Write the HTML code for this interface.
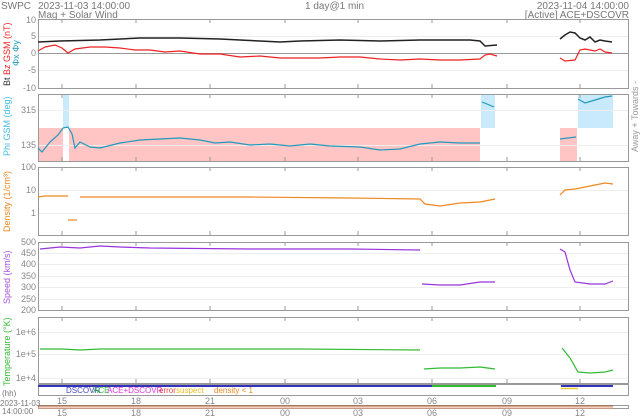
<!DOCTYPE html>
<html><head><meta charset="utf-8"><style>
html,body{margin:0;padding:0;background:#fff;width:640px;height:418px;overflow:hidden}
svg{display:block;font-family:"Liberation Sans",sans-serif}
</style></head><body>
<svg width="640" height="418" viewBox="0 0 640 418" xmlns="http://www.w3.org/2000/svg">
<g font-size="10" fill="#777">
<text x="1" y="9">SWPC</text>
<text x="38" y="9">2023-11-03 14:00:00</text>
<text x="38" y="18">Mag + Solar Wind</text>
<text x="305" y="9">1 day@1 min</text>
<text x="629" y="9" text-anchor="end">2023-11-04 14:00:00</text>
<text x="629" y="18" text-anchor="end">[Active] ACE+DSCOVR</text>
</g>
<!-- shading panel 2 -->
<rect x="38" y="128" width="442" height="34" fill="#ffc4c4"/>
<rect x="63" y="94" width="6" height="34" fill="#c8eafc"/>
<rect x="63" y="128" width="6" height="34" fill="#fff"/>
<rect x="481" y="94" width="14" height="34" fill="#c8eafc"/>
<rect x="560" y="128" width="17" height="34" fill="#ffc4c4"/>
<rect x="578" y="94" width="35" height="34" fill="#c8eafc"/>
<!-- grid lines -->
<g stroke="#eee" stroke-width="1">
<line x1="38" y1="36.5" x2="629" y2="36.5"/><line x1="38" y1="70.5" x2="629" y2="70.5"/>
<line x1="38" y1="110.5" x2="629" y2="110.5"/><line x1="38" y1="145.5" x2="629" y2="145.5"/>
<line x1="38" y1="190.5" x2="629" y2="190.5"/><line x1="38" y1="213.5" x2="629" y2="213.5"/>
<line x1="38" y1="253.5" x2="629" y2="253.5"/><line x1="38" y1="264.5" x2="629" y2="264.5"/><line x1="38" y1="276.5" x2="629" y2="276.5"/><line x1="38" y1="287.5" x2="629" y2="287.5"/><line x1="38" y1="299.5" x2="629" y2="299.5"/>
<line x1="38" y1="332.5" x2="629" y2="332.5"/><line x1="38" y1="354.5" x2="629" y2="354.5"/><line x1="38" y1="378.5" x2="629" y2="378.5"/>
</g>
<line x1="38" y1="53.5" x2="629" y2="53.5" stroke="#999"/>
<!-- panel frames -->
<g fill="none" stroke="#999" stroke-width="1">
<rect x="38.5" y="19.5" width="590" height="69"/>
<rect x="38.5" y="94.5" width="590" height="67"/>
<rect x="38.5" y="167.5" width="590" height="68"/>
<rect x="38.5" y="242.5" width="590" height="68"/>
<rect x="38.5" y="317.5" width="590" height="66"/>
<rect x="38.5" y="384.5" width="590" height="11"/>
<rect x="38.5" y="405.5" width="590" height="3"/>
</g>
<!-- ticks -->
<g stroke="#999">
<path d="M62 19v4M136 19v4M210 19v4M285 19v4M358 19v4M432 19v4M507 19v4M580 19v4M62 88v-4M136 88v-4M210 88v-4M285 88v-4M358 88v-4M432 88v-4M507 88v-4M580 88v-4"/>
<path d="M62 94v4M136 94v4M210 94v4M285 94v4M358 94v4M432 94v4M507 94v4M580 94v4M62 161v-4M136 161v-4M210 161v-4M285 161v-4M358 161v-4M432 161v-4M507 161v-4M580 161v-4"/>
<path d="M62 167v4M136 167v4M210 167v4M285 167v4M358 167v4M432 167v4M507 167v4M580 167v4M62 235v-4M136 235v-4M210 235v-4M285 235v-4M358 235v-4M432 235v-4M507 235v-4M580 235v-4"/>
<path d="M62 242v4M136 242v4M210 242v4M285 242v4M358 242v4M432 242v4M507 242v4M580 242v4M62 310v-4M136 310v-4M210 310v-4M285 310v-4M358 310v-4M432 310v-4M507 310v-4M580 310v-4"/>
<path d="M62 317v4M136 317v4M210 317v4M285 317v4M358 317v4M432 317v4M507 317v4M580 317v4M62 383v-4M136 383v-4M210 383v-4M285 383v-4M358 383v-4M432 383v-4M507 383v-4M580 383v-4"/>
</g>
<!-- P1 data -->
<polyline fill="none" stroke="#222" stroke-width="1.5" points="38,42 60,41 100,40 140,38 180,38 220,39 260,41 280,42 300,41 340,40 380,41 420,40 470,40 480,41 485,46 497,45"/>
<polyline fill="none" stroke="#222" stroke-width="1.5" points="560,39 565,35 570,32 575,33 580,38 585,40 590,37 595,42 600,40 605,41 612,42"/>
<polyline fill="none" stroke="#e22" stroke-width="1.2" points="38,51 45,47 55,45 62,48 68,53 75,49 90,47 105,47 120,48 135,50 150,50 165,52 180,51 200,54 220,54 240,57 260,56 280,58 300,58 320,58 340,57 360,57 380,59 400,60 420,59 440,60 460,60 480,59 485,55 490,54 497,56"/>
<polyline fill="none" stroke="#e22" stroke-width="1.2" points="560,58 565,61 575,60 580,50 585,49 595,51 600,49 605,52 612,53"/>
<!-- P2 data -->
<polyline fill="none" stroke="#29b" stroke-width="1.2" points="38,148 42,152 50,142 58,135 63,128 68,127 72,134 75,148 80,142 90,147 100,148 120,143 140,140 160,139 180,138 200,140 215,143 230,142 250,145 270,144 290,146 310,144 330,146 360,147 380,150 400,149 420,144 440,142 460,143 480,143"/>
<polyline fill="none" stroke="#29b" stroke-width="1.2" points="482,102 487,104 494,107"/>
<polyline fill="none" stroke="#29b" stroke-width="1.2" points="560,139 576,137"/>
<polyline fill="none" stroke="#29b" stroke-width="1.2" points="578,99 585,103 595,100 605,97 612,96"/>
<!-- P3 density -->
<polyline fill="none" stroke="#e82" stroke-width="1.2" points="38,197 45,196 62,196 68,196"/>
<polyline fill="none" stroke="#e82" stroke-width="1.2" points="68,220 77,220"/>
<polyline fill="none" stroke="#e82" stroke-width="1.2" points="80,197 150,197 250,197 350,198 420,199 425,204 440,206 460,203 480,202 495,199"/>
<polyline fill="none" stroke="#e82" stroke-width="1.2" points="560,195 565,190 575,189 590,186 605,183 613,184"/>
<!-- P4 speed -->
<polyline fill="none" stroke="#93d" stroke-width="1.2" points="40,249 60,247 80,248 100,246 120,247 150,248 250,249 350,249 420,250"/>
<polyline fill="none" stroke="#93d" stroke-width="1.2" points="422,284 440,285 460,285 480,282 495,282"/>
<polyline fill="none" stroke="#93d" stroke-width="1.2" points="560,249 565,252 570,270 575,282 590,284 605,284 613,281"/>
<!-- P5 temp -->
<polyline fill="none" stroke="#3b3" stroke-width="1.2" points="40,349 62,349 80,350 100,349 200,349 300,349 420,350"/>
<polyline fill="none" stroke="#3b3" stroke-width="1.2" points="424,369 440,368 460,368 480,367 495,369"/>
<polyline fill="none" stroke="#3b3" stroke-width="1.2" points="562,348 570,358 578,372 590,373 605,372 613,370"/>
<!-- status bar -->
<line x1="38" y1="386" x2="432" y2="386" stroke="#33b" stroke-width="2"/>
<line x1="432" y1="386" x2="496" y2="386" stroke="#3b3" stroke-width="2"/>
<line x1="561" y1="386" x2="613" y2="386" stroke="#33b" stroke-width="2"/>
<line x1="561" y1="388.5" x2="578" y2="388.5" stroke="#ec3" stroke-width="1.5"/>
<line x1="38" y1="406" x2="613" y2="406" stroke="#a53" stroke-width="1"/>
<line x1="38" y1="408" x2="613" y2="408" stroke="#e97" stroke-width="1"/>
<g font-size="8">
<text x="66" y="393" fill="#44c">DSCOVR</text><text x="93" y="393" fill="#3b3">ACE</text>
<text x="107" y="393" fill="#d3d">ACE+DSCOVR</text>
<text x="159" y="393" fill="#e44">error</text><text x="176" y="393" fill="#eb2">suspect</text>
<text x="214" y="393" fill="#e82">density &lt; 1</text>
</g>
<!-- axis labels -->
<g font-size="9" fill="#888" text-anchor="end">
<text x="36" y="23">10</text><text x="36" y="39">5</text><text x="36" y="56">0</text><text x="36" y="73">-5</text><text x="36" y="91">-10</text>
<text x="36" y="113">315</text><text x="36" y="148">135</text>
<text x="36" y="170">100</text><text x="36" y="193">10</text><text x="36" y="216">1</text>
<text x="36" y="245">500</text><text x="36" y="256">450</text><text x="36" y="267">400</text><text x="36" y="279">350</text><text x="36" y="290">300</text><text x="36" y="302">250</text><text x="36" y="313">200</text>
<text x="36" y="335">1e+6</text><text x="36" y="357">1e+5</text><text x="36" y="381">1e+4</text>
</g>
<g font-size="9" fill="#888" text-anchor="middle">
<text x="62" y="404">15</text><text x="136" y="404">18</text><text x="210" y="404">21</text><text x="285" y="404">00</text><text x="358" y="404">03</text><text x="432" y="404">06</text><text x="507" y="404">09</text><text x="580" y="404">12</text>
<text x="62" y="416">15</text><text x="136" y="416">18</text><text x="210" y="416">21</text><text x="285" y="416">00</text><text x="358" y="416">03</text><text x="432" y="416">06</text><text x="507" y="416">09</text><text x="580" y="416">12</text>
</g>
<g font-size="8" fill="#777">
<text x="2" y="396">(hh)</text><text x="0" y="406">2023-11-03</text><text x="2" y="414">14:00:00</text>
</g>
<!-- rotated labels -->
<g font-size="9">
<text transform="translate(10,75) rotate(-90)" fill="#e22">Bz GSM (nT)</text>
<text transform="translate(19,66) rotate(-90)" fill="#29b">Φx Φy</text>
<text transform="translate(10,86) rotate(-90)" fill="#333">Bt</text>
<text transform="translate(10,156) rotate(-90)" fill="#4bd">Phi GSM (deg)</text>
<text transform="translate(10,232) rotate(-90)" fill="#e82">Density (1/cm³)</text>
<text transform="translate(10,304) rotate(-90)" fill="#a5d">Speed (km/s)</text>
<text transform="translate(10,386) rotate(-90)" fill="#3b3">Temperature (°K)</text>
<text transform="translate(638,152) rotate(-90)" fill="#999">Away + Towards -</text>
</g>
</svg>
</body></html>
